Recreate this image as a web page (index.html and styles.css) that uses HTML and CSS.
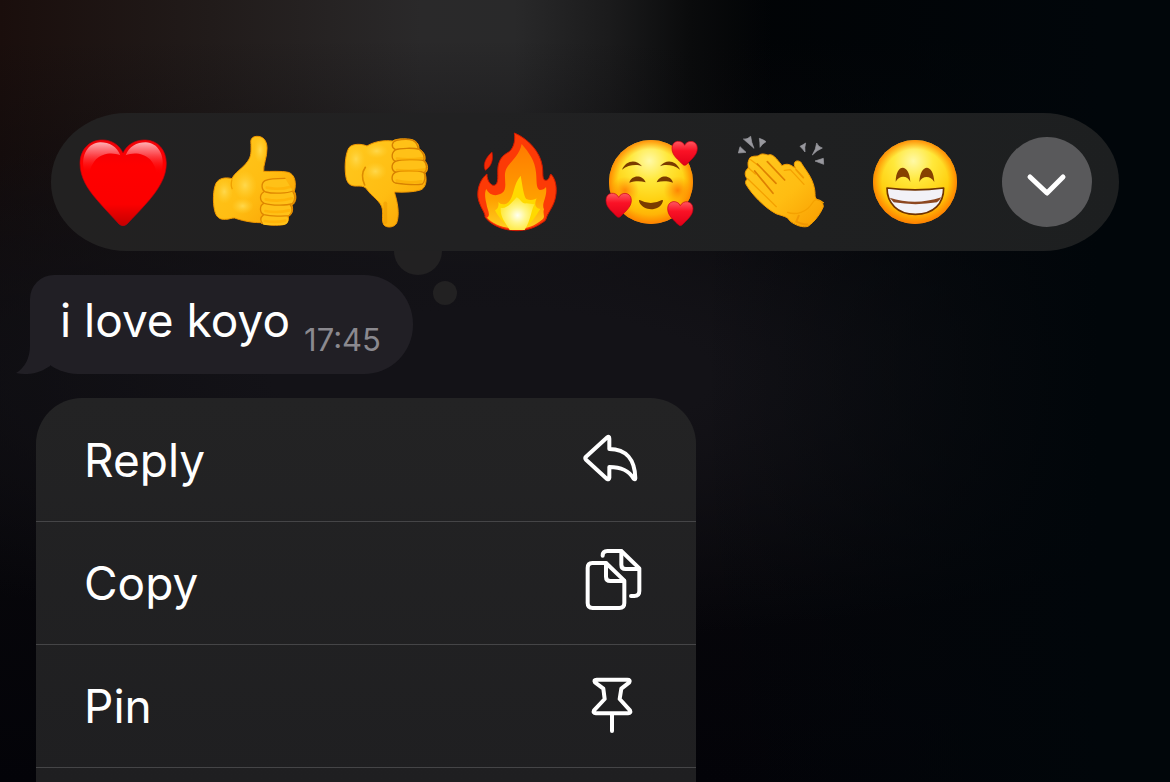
FILE: index.html
```html
<!DOCTYPE html>
<html lang="en">
<head>
    <meta charset="UTF-8">
    <meta name="viewport" content="width=device-width, initial-scale=1.0">
    <title>Message menu</title>
    <link rel="stylesheet" href="styles.css">
</head>
<body>
    <main class="overlay">
        <div class="reactions">
            <button class="reaction" aria-label="Heart">
                <svg viewBox="21 18 336 336">
                    <defs>
                        <linearGradient id="heartFill" x1="0" y1="0" x2="0" y2="1">
                            <stop offset="0" stop-color="#f00008"/>
                            <stop offset=".3" stop-color="#ff0000"/>
                            <stop offset=".75" stop-color="#fb0000"/>
                            <stop offset="1" stop-color="#c40000"/>
                        </linearGradient>
                        <linearGradient id="heartShine" x1="0" y1="0" x2="0" y2="1">
                            <stop offset="0" stop-color="#ffb0b4"/>
                            <stop offset=".35" stop-color="#ff7a80" stop-opacity=".7"/>
                            <stop offset="1" stop-color="#ff0000" stop-opacity="0"/>
                        </linearGradient>
                    </defs>
                    <path d="M189 99C176 70 148 58 121 60C85 62 60 92 60 130C60 172 83 208 112 241C135 268 158 291 177 312Q189 322 201 312C221 291 245 267 268 240C296 207 319 171 319 130C319 91 294 61 257 60C229 59 202 71 189 99Z" fill="url(#heartFill)" stroke="#c9000a" stroke-width="2"/>
                    <path d="M72 150C62 106 84 68 121 67C148 67 171 80 181 106C160 96 128 98 108 118Q92 136 88 160Q76 162 72 150Z" fill="url(#heartShine)"/>
                    <path d="M306 150C316 106 294 68 257 67C230 67 207 80 197 106C218 96 250 98 270 118Q286 136 290 160Q302 162 306 150Z" fill="url(#heartShine)"/>
                </svg>
            </button>
            <button class="reaction" aria-label="Thumbs up">
                <svg viewBox="417 18 336 336">
                    <defs>
                        <linearGradient id="handFill" x1="0" y1="0" x2="1" y2="1">
                            <stop offset="0" stop-color="#ffc91f"/>
                            <stop offset=".55" stop-color="#ffbd12"/>
                            <stop offset="1" stop-color="#f99d00"/>
                        </linearGradient>
                        <radialGradient id="handGlow">
                            <stop offset="0" stop-color="#ffd84c"/>
                            <stop offset="1" stop-color="#ffcf2e" stop-opacity="0"/>
                        </radialGradient>
                    </defs>
                    <path d="M516 176C494 170 475 176 468 190C459 210 458 246 464 272C469 291 478 299 496 298C508 298 516 293 524 294C540 300 570 308 602 308C614 316 645 317 663 315C683 314 687 301 685 289C698 283 700 269 696 256C710 247 710 226 703 214C710 190 705 163 685 157C665 152 632 155 611 154C609 136 622 110 621 84C621 61 608 48 590 49C575 50 571 58 573 73C573 93 575 108 563 124C548 146 524 157 516 176Z" fill="url(#handFill)" stroke="#f09600" stroke-width="3"/>
                    <ellipse cx="555" cy="196" rx="35" ry="44" fill="url(#handGlow)"/>
                    <ellipse cx="493" cy="215" rx="26" ry="36" fill="url(#handGlow)"/>
                    <ellipse cx="548" cy="258" rx="33" ry="24" fill="url(#handGlow)"/>
                    <ellipse cx="600" cy="90" rx="18" ry="38" fill="url(#handGlow)"/>
                    <g fill="#ffc117" stroke="#df8600" stroke-width="4" stroke-linecap="round">
                        <rect x="601" y="285" width="84" height="30" rx="15" stroke="none"/>
                        <path d="M610 285Q596 296 607 310" fill="none"/>
                        <path d="M611 250C598 257 598 279 612 284C632 289 672 289 687 287C698 279 698 262 691 255"/>
                        <path d="M611 216C598 224 598 243 613 250C635 257 680 257 697 251C706 241 706 225 699 216"/>
                        <path d="M675 175C648 175 624 178 615 182C602 190 604 210 617 216C640 222 682 220 699 213"/>
                    </g>
                    <path d="M620 203Q655 211 693 200M617 238Q655 247 696 235M616 273Q650 280 688 271M614 303Q645 309 676 302" stroke="#ffab00" stroke-width="8" stroke-linecap="round" fill="none" opacity=".6"/>
                    <path d="M516 178Q511 195 517 208" stroke="#efa000" stroke-width="4" fill="none"/>
                </svg>
            </button>
            <button class="reaction" aria-label="Thumbs down">
                <svg viewBox="18 18 336 336">
                    <path d="M126 78C110 71 83 70 72 83C59 104 58 153 64 176C69 194 80 200 102 198C112 198 119 200 125 207C139 229 169 244 172 267C175 283 169 302 176 314C185 325 208 323 215 309C225 281 217 245 208 216C233 217 266 217 286 210C303 205 307 178 300 160C311 153 310 132 299 123C304 108 296 94 282 87C283 67 267 57 247 57C231 56 214 56 202 63C179 60 148 64 126 78Z" fill="url(#handFill)" stroke="#f09600" stroke-width="3"/>
                    <ellipse cx="93" cy="117" rx="27" ry="37" fill="url(#handGlow)"/>
                    <ellipse cx="151" cy="154" rx="34" ry="28" fill="url(#handGlow)"/>
                    <ellipse cx="155" cy="93" rx="35" ry="22" fill="url(#handGlow)"/>
                    <g fill="#ffc117" stroke="#d78000" stroke-width="4" stroke-linejoin="round">
                        <path d="M210 88C197 80 200 65 215 61C237 57 267 55 275 72Q279 80 279 87Z"/>
                        <path d="M211 90C225 84 266 83 283 88C296 97 299 112 296 121L213 125C198 119 198 99 211 90Z"/>
                        <path d="M211 124C229 118 280 117 296 122C307 130 307 149 298 158L214 158C197 151 198 132 211 124Z"/>
                        <path d="M211 157C229 151 278 152 296 157C304 166 299 186 292 192C270 196 234 192 211 189C198 184 198 164 211 157Z"/>
                    </g>
                    <path d="M215 182Q253 191 289 184M216 150Q255 155 298 149M216 116Q255 120 291 115" stroke="#f9a800" stroke-width="8" stroke-linecap="round" fill="none" opacity=".6"/>
                    <path d="M121 142Q105 165 119 195" stroke="#dd8b00" stroke-width="5" stroke-linecap="round" fill="none"/>
                    <path d="M181 250L181 307" stroke="#ed9800" stroke-width="11" stroke-linecap="round" opacity=".5"/>
                </svg>
            </button>
            <button class="reaction" aria-label="Fire">
                <svg viewBox="414 18 336 336">
                    <defs>
                        <radialGradient id="fireCore" cx=".5" cy=".55" r=".6">
                            <stop offset="0" stop-color="#fffff0"/>
                            <stop offset=".4" stop-color="#fff68c"/>
                            <stop offset="1" stop-color="#ffe420"/>
                        </radialGradient>
                        <linearGradient id="fireMid" x1="0" y1="0" x2="0" y2="1">
                            <stop offset="0" stop-color="#ff7a00"/>
                            <stop offset=".65" stop-color="#ffa000"/>
                            <stop offset="1" stop-color="#ffd020"/>
                        </linearGradient>
                    </defs>
                    <path d="M501 96C506 120 499 139 481 151C471 132 486 108 501 96Z" fill="#f32a05" stroke="#c80d00" stroke-width="2"/>
                    <path d="M568 39C608 55 646 95 652 139C655 161 651 176 660 181C672 182 673 170 677 162C691 174 697 202 692 229C688 256 671 275 665 291Q665 302 649 310C624 327 591 335 560 331C529 328 495 313 480 291C482 279 464 261 459 233C455 203 469 174 486 162C485 183 500 201 511 195C525 185 513 150 522 128C530 105 545 101 555 93C568 79 571 59 568 39Z" fill="#fc3a06" stroke="#cf1800" stroke-width="3"/>
                    <path d="M590 72C612 97 630 123 633 157C636 183 632 204 644 210Q657 210 663 201C668 231 648 251 657 268C652 282 662 288 653 298C627 321 602 328 565 326C530 322 503 311 486 293C499 284 486 269 484 250C479 232 479 214 484 207C494 228 514 229 530 220C552 206 532 170 544 146C556 125 584 105 590 72Z" fill="url(#fireMid)"/>
                    <path d="M587 167C593 200 596 228 604 237C619 244 632 237 635 235C625 258 635 264 646 267C634 285 621 309 602 323Q576 331 550 322C533 302 519 291 510 271Q523 266 520 246Q528 256 544 251C569 237 562 195 587 167Z" fill="#ffd900"/>
                    <path d="M575 232C588 238 590 252 604 250L629 253C618 270 618 300 599 330H554C540 306 525 291 527 263C546 268 561 246 575 232Z" fill="url(#fireCore)"/>
                </svg>
            </button>
            <button class="reaction" aria-label="Smiling face with hearts">
                <svg viewBox="15 18 336 336">
                    <defs>
                        <radialGradient id="faceFill" cx=".48" cy=".25" r=".78">
                            <stop offset="0" stop-color="#fff9a6"/>
                            <stop offset=".3" stop-color="#ffe83a"/>
                            <stop offset=".65" stop-color="#ffcd0c"/>
                            <stop offset="1" stop-color="#ff9a00"/>
                        </radialGradient>
                        <radialGradient id="faceEdge">
                            <stop offset=".78" stop-color="#ff8a00" stop-opacity="0"/>
                            <stop offset="1" stop-color="#ff7800" stop-opacity=".8"/>
                        </radialGradient>
                        <radialGradient id="blush">
                            <stop offset="0" stop-color="#ff6500" stop-opacity=".7"/>
                            <stop offset="1" stop-color="#ff8400" stop-opacity="0"/>
                        </radialGradient>
                        <linearGradient id="miniHeart" x1="0" y1="0" x2="0" y2="1">
                            <stop offset="0" stop-color="#ff5860"/>
                            <stop offset=".4" stop-color="#fa1226"/>
                            <stop offset="1" stop-color="#e20018"/>
                        </linearGradient>
                        <path id="smallHeart" d="M0-23C-8-41-38-40-38-14C-38 8-20 19-5 35Q0 39 5 35C20 19 38 7 38-14C38-39 8-41 0-23Z" fill="url(#miniHeart)" stroke="#c80014" stroke-width="2"/>
                    </defs>
                    <circle cx="183" cy="186" r="126" fill="url(#faceFill)"/>
                    <circle cx="183" cy="186" r="126" fill="url(#faceEdge)"/>
                    <circle cx="105" cy="212" r="42" fill="url(#blush)"/>
                    <circle cx="263" cy="211" r="42" fill="url(#blush)"/>
                    <g fill="#7a3b00">
                        <path d="M96 149C108 120 139 116 156 139C140 132 114 135 96 149Z"/>
                        <path d="M210 139C227 116 258 120 270 149C252 135 226 132 210 139Z"/>
                        <path d="M118 188C124 164 158 163 167 187C150 182 135 183 118 188Z"/>
                        <path d="M200 187C209 163 243 164 249 188C232 183 217 182 200 187Z"/>
                        <path d="M149 240Q182 258 216 240Q221 239 218 246C208 274 162 276 148 247Q145 239 149 240Z"/>
                    </g>
                    <use href="#smallHeart" x="284" y="99"/>
                    <use href="#smallHeart" x="86" y="255"/>
                    <use href="#smallHeart" x="271" y="280"/>
                </svg>
            </button>
            <button class="reaction" aria-label="Clapping hands">
                <svg viewBox="411 18 336 336">
                    <g fill="#98989e" stroke="#98989e" stroke-width="2" stroke-linejoin="round">
                        <path d="M460 57Q471 60 482 49Q484 68 492 85Q477 72 460 57Z"/>
                        <path d="M508 55Q520 59 528 65Q517 71 510 82Q510 68 508 55Z"/>
                        <path d="M450 80L468 97L445 99Z"/>
                        <path d="M630 79Q638 75 647 69Q643 82 645 96Q639 88 630 79Z"/>
                        <path d="M680 69Q685 81 697 84Q680 91 667 105Q678 88 680 69Z"/>
                        <path d="M675 123L700 115L701 133Z"/>
                    </g>
                    <path d="M479 114C489 105 505 111 508 105C518 98 530 105 535 105C547 100 558 113 576 137C594 127 605 137 617 145C606 127 619 117 632 126C645 149 668 171 674 209C677 227 671 237 689 242Q701 249 700 260C691 282 674 305 654 319C638 324 615 315 601 304C591 288 579 289 558 281C522 262 483 220 468 193C464 185 470 178 472 177C463 166 463 153 475 144Q471 126 479 114Z" fill="url(#handFill)" stroke="#f39a00" stroke-width="3"/>
                    <path d="M593 277C617 286 651 277 667 249C674 237 683 235 700 248M583 151L601 149L642 193M473 176L559 260M476 144L496 162M482 119L506 137" stroke="#f5a100" stroke-width="4" fill="none" stroke-linecap="round"/>
                    <path d="M494 153L549 220M502 132L558 190M532 125L584 180" stroke="#df8100" stroke-width="5" stroke-linecap="round"/>
                    <path d="M618 149L640 173" stroke="#f09a00" stroke-width="5" stroke-linecap="round"/>
                    <path d="M627 285L619 305Q642 316 654 313" stroke="#e98c00" stroke-width="6" fill="none" opacity=".6"/>
                </svg>
            </button>
            <button class="reaction" aria-label="Grinning face">
                <svg viewBox="12 63 336 336">
                    <circle cx="180" cy="231" r="126" fill="url(#faceFill)"/>
                    <circle cx="180" cy="231" r="126" fill="url(#faceEdge)"/>
                    <path d="M122 230C123 174 163 174 166 231C158 212 134 209 122 230Z" fill="#864000"/>
                    <path d="M193 231C196 174 235 174 238 231C226 210 202 212 193 231Z" fill="#864000"/>
                    <path d="M96 249Q180 260 266 249C266 295 237 328 181 328C127 328 96 294 96 249Z" fill="#f2f2f7" stroke="#703300" stroke-width="5" stroke-linejoin="round"/>
                    <path d="M104 278Q180 303 259 277Q253 288 246 292Q182 303 116 292Z" fill="#8d4820"/>
                </svg>
            </button>
            <button class="reaction" aria-label="More reactions">
                <span class="more">
                    <svg viewBox="0 0 90 90">
                        <path d="M28 40L45 56L61 40" fill="none" stroke="#fff" stroke-width="5" stroke-linecap="round" stroke-linejoin="round"/>
                    </svg>
                </span>
            </button>
        </div>

        <div class="message">
            <svg class="tail" viewBox="0 0 36 48">
                <path d="M14 0V19C14 32 9 42 0 47C15 50 25 46 34 40V0Z"/>
            </svg>
            <span class="text">i love koyo</span>
            <time class="time">17:45</time>
        </div>

        <div class="menu">
            <button class="menuItem">
                Reply
                <svg class="icon" viewBox="48 72 216 216">
                    <path d="M142 112Q148 107 148 116V147C198 147 225 178 226 235Q226 240 221 236C206 211 185 201 148 201V233Q147 240 141 237L78 179Q74 174 78 170Z"/>
                </svg>
            </button>
            <button class="menuItem">
                Copy
                <svg class="icon" viewBox="48 441 216 216">
                    <path d="M97 489H138L193 542V609Q193 624 178 624H98Q83 624 83 609V504Q83 489 97 489Z"/>
                    <path d="M138 490V530Q138 543 151 543H192"/>
                    <path d="M128 467Q128 453 142 453H184L238 505V573Q238 588 223 588H213"/>
                    <path d="M184 454V494Q184 507 197 507H237"/>
                </svg>
            </button>
            <button class="menuItem">
                Pin
                <svg class="icon" viewBox="48 810 216 216">
                    <path d="M110 839H202Q212 839 208 847L184 866L179 897L210 931Q214 939 204 940H108Q98 939 102 931L134 897L130 866L105 847Q100 839 110 839Z"/>
                    <path d="M156 942V993"/>
                </svg>
            </button>
            <div class="menuRest"></div>
        </div>
    </main>
</body>
</html>
```
FILE: styles.css
```css
* {
    box-sizing: border-box;
}
body {
    margin: 0;
    font-family: Inter, "Liberation Sans", sans-serif;
    color: #fff;
    background-color: #020508;
    background-image:
        linear-gradient(to right, transparent 60%, #01060a 94%),
        radial-gradient(ellipse 75% 34% at 42% 48%, #131217 25%, transparent),
        linear-gradient(to bottom, transparent 5%, #0a090c 45%, #030308 100%),
        linear-gradient(to right, #1a0e0c 0%, #211b1a 18%, #2a292a 36%, #29292a 44%, #1b1b1c 52%, #0a0b0c 59%, #010305 66%);
}
button {
    font: inherit;
    color: inherit;
    background: none;
    border: none;
    padding: 0;
    cursor: pointer;
}
svg {
    display: block;
}
.overlay {
    display: flex;
    flex-direction: column;
    min-height: 100vh;
    padding-top: 113px;
}
.reactions {
    position: relative;
    display: flex;
    justify-content: space-between;
    align-items: center;
    height: 138px;
    margin: 0 51px;
    padding: 0 16px;
    border-radius: 76px / 69px;
    background: linear-gradient(to right, #222121, #212122 40%, #1d1f20);
}
/* thought bubble dots under the bar */
.reactions::before,
.reactions::after {
    content: "";
    position: absolute;
    background-color: #222122;
}
.reactions::before {
    top: 100%;
    left: 343px;
    width: 48px;
    height: 24px;
    border-radius: 0 0 24px 24px;
}
.reactions::after {
    top: 168px;
    left: 382px;
    width: 24px;
    height: 24px;
    border-radius: 50%;
}
.reaction {
    flex: 0 1 112px;
}
.more {
    display: block;
    width: 90px;
    margin: 0 auto;
    border-radius: 50%;
    background-color: #59595b;
}
.message {
    position: relative;
    display: flex;
    align-items: flex-start;
    gap: 14px;
    width: fit-content;
    height: 99px;
    margin: 24px 0 0 30px;
    padding: 15px 32px 0 30px;
    border-radius: 24px 49px 49px 48px;
    background-color: #211f25;
}
.tail {
    position: absolute;
    left: -14px;
    bottom: 0;
    width: 36px;
    height: 48px;
    fill: #211f25;
}
.text {
    font-size: 46px;
    line-height: 60px;
}
.time {
    margin-top: 30px;
    font-size: 31px;
    line-height: 40px;
    color: #8b898f;
}
.menu {
    display: flex;
    flex-direction: column;
    flex: 1;
    width: calc(100% - 72px);
    max-width: 660px;
    margin: 24px 36px 0;
    border-radius: 46px 46px 0 0;
    background: linear-gradient(to bottom, #232324, #1f1f21);
}
.menuItem {
    display: flex;
    justify-content: space-between;
    align-items: center;
    height: 123px;
    padding: 0 48px;
    font-size: 46px;
    line-height: 60px;
    text-align: left;
}
.menuItem + .menuItem,
.menuRest {
    border-top: 1px solid #454547;
}
.menuRest {
    flex: 1;
}
.icon {
    width: 72px;
    height: 72px;
    fill: none;
    stroke: #fff;
    stroke-width: 12;
    stroke-linecap: round;
    stroke-linejoin: round;
}
```
